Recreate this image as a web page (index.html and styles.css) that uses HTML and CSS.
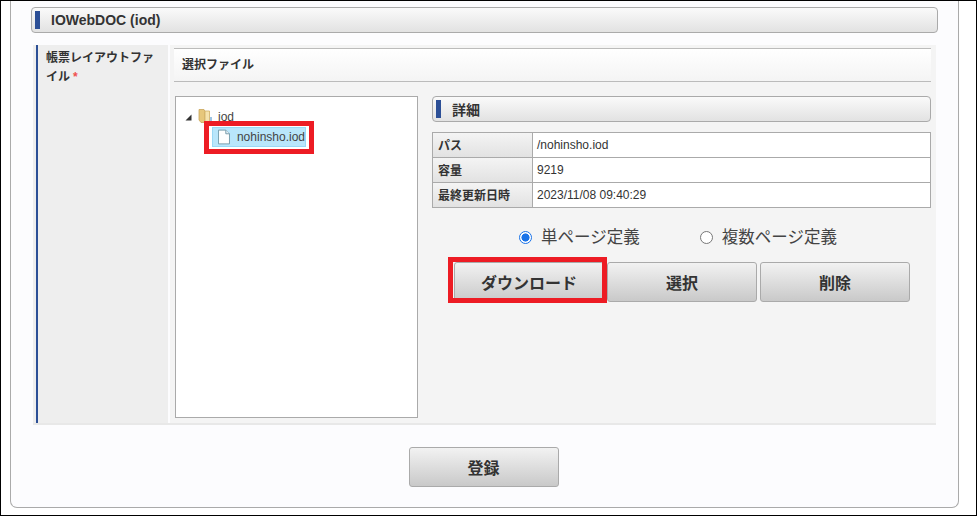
FILE: index.html
```html
<!DOCTYPE html>
<html lang="ja">
<head>
<meta charset="utf-8">
<title>IOWebDOC</title>
<link rel="stylesheet" href="styles.css">
</head>
<body>
<div class="frame">
  <div class="card">
    <div class="bar page-bar"><span class="mark"></span><span class="bar-title">IOWebDOC (iod)</span></div>
    <div class="form-row">
      <div class="label-cell"><div class="label-text">帳票レイアウトファイル<span class="req">*</span></div></div>
      <div class="content-cell">
        <div class="sub-head">選択ファイル</div>
        <div class="columns">
          <div class="tree">
            <div class="tree-row">
              <svg class="arrow" width="7" height="7" viewBox="0 0 7 7"><path d="M6.500 .5V6.500H.5Z" fill="#333"/></svg>
              <svg class="folder" width="15" height="16" viewBox="0 0 15 16"><path d="M1 1.500h5l1 2v11H3L1 12Z" fill="#e6c77c" stroke="#c9a65a" stroke-width=".8"/><path d="M7 3h4.500v10.500L7 15Z" fill="#f5e3ae" stroke="#cfae66" stroke-width=".8"/><path d="M12 9h2v5h-2z" fill="#9cc4e4"/></svg>
              <span class="tree-root">iod</span>
            </div>
            <div class="tree-file">
              <svg width="13" height="16" viewBox="0 0 13 16"><path d="M.5 .5H8.500L12.500 4.500V15.500H.5Z" fill="#fdfefe" stroke="#6f97a8"/><path d="M8.500 .5V4.500H12.500" fill="#e3eef2" stroke="#6f97a8"/></svg>
              <span>nohinsho.iod</span>
            </div>
            <span class="hl hl-file"></span>
          </div>
          <div class="detail">
            <div class="bar detail-bar"><span class="mark"></span><span class="bar-title">詳細</span></div>
            <div class="info">
              <div class="info-k">パス</div><div class="info-v">/nohinsho.iod</div>
              <div class="info-k">容量</div><div class="info-v">9219</div>
              <div class="info-k">最終更新日時</div><div class="info-v">2023/11/08 09:40:29</div>
            </div>
            <div class="radios">
              <label class="radio"><span class="dot on"></span>単ページ定義</label>
              <label class="radio"><span class="dot"></span>複数ページ定義</label>
            </div>
            <div class="btns">
              <div class="btn">ダウンロード<span class="hl hl-btn"></span></div>
              <div class="btn">選択</div>
              <div class="btn">削除</div>
            </div>
          </div>
        </div>
      </div>
    </div>
    <div class="footer"><div class="btn">登録</div></div>
  </div>
</div>
</body>
</html>
```
FILE: styles.css
```css
* { box-sizing: border-box; }
html, body { margin: 0; padding: 0; background: #fff; }
body { width: 977px; height: 516px; overflow: hidden; font-family: "Liberation Sans", "Noto Sans CJK JP", sans-serif; color: #333; }
.frame { width: 977px; height: 516px; border: 1px solid #000; padding: 0 17px 7px 9px; }
.card { height: 100%; background: #fcfcfe; border: 1px solid #aaa; border-top: 0; border-radius: 0 0 7px 7px; padding: 6px 20px 0 20px; }
.bar { display: flex; align-items: center; border: 1px solid #aaa; border-radius: 4px; background: linear-gradient(#fafafa, #e2e2e2); height: 26px; padding-left: 3px; }
.mark { width: 5px; height: 18px; background: #2c4f96; flex: none; }
.bar-title { font-size: 14px; font-weight: bold; margin-left: 11px; color: #333; }
.page-bar { margin-bottom: 12px; }
.form-row { display: flex; margin: 0 2px; border-bottom: 2px solid #e8e8e8; height: 380px; }
.label-cell { width: 135px; flex: none; background: #eee; margin-right: 2px; padding-left: 3px; }
.label-text { height: 100%; border-left: 2px solid #2c4f96; padding: 4px 12px 0 8px; font-size: 12px; font-weight: bold; line-height: 19px; }
.req { color: #f05050; margin-left: 3px; }
.content-cell { flex: 1; background: #f4f4f4; padding: 3px 5px 0 4px; min-width: 0; }
.sub-head { height: 34px; border-top: 1px solid #bbb; border-bottom: 1px solid #bbb; background: linear-gradient(#fff, #f4f4f4); font-size: 12px; font-weight: bold; line-height: 33px; padding-left: 8px; }
.columns { display: flex; margin-top: 14px; margin-left: 1px; gap: 14px; }
.tree { position: relative; width: 243px; height: 322px; flex: none; background: #fff; border: 1px solid #aaa; padding: 11px 0 0 9px; }
.tree-row { display: flex; align-items: center; height: 16px; font-size: 12px; }
.arrow { margin-right: 6px; margin-top: 2px; }
.folder { margin-right: 5px; }
.tree-root { color: #444; position: relative; top: 1px; }
.tree-file { display: flex; align-items: center; gap: 7px; width: 94px; height: 20px; margin: 3px 0 0 27px; padding-left: 5px; background: #b9e6fb; border: 1px solid #9ad8f5; font-size: 12px; color: #444; }
.hl { position: absolute; border: 5px solid #ed1c24; pointer-events: none; }
.hl-file { left: 28px; top: 24px; width: 110px; height: 33px; }
.detail { flex: 1; min-width: 0; }
.detail-bar { margin-bottom: 10px; }
.info { display: grid; grid-template-columns: 100px 1fr; grid-auto-rows: 25px; border: 1px solid #aaa; border-bottom: 0; }
.info-k, .info-v { display: flex; align-items: center; border-bottom: 1px solid #aaa; font-size: 12px; }
.info-k { background: linear-gradient(#f4f4f4, #e2e2e2); border-right: 1px solid #aaa; font-weight: bold; padding: 0 0 2px 5px; }
.info-v { background: #fff; padding-left: 4px; }
.radios { display: flex; justify-content: center; gap: 60px; margin-top: 18px; padding-right: 7px; }
.radio { display: flex; align-items: center; gap: 9px; font-size: 16.500px; line-height: 22px; color: #444; }
.dot { width: 13px; height: 13px; border: 1px solid #777; border-radius: 50%; background: #fff; }
.dot.on { border: 1px solid #1a73e8; background: radial-gradient(circle, #1a73e8 0 3.800px, #fff 4.300px); }
.btns { display: flex; gap: 3px; margin-top: 14px; padding-left: 22px; }
.btn { position: relative; display: flex; align-items: center; justify-content: center; width: 150px; height: 40px; border: 1px solid #aaa; border-radius: 3px; background: linear-gradient(#f2f2f2, #c9c9c9); font-size: 16px; font-weight: bold; color: #333; }
.hl-btn { left: -7px; top: -6px; width: 159px; height: 46px; }
.footer { display: flex; justify-content: center; padding: 22px 2px 0 0; }
```
